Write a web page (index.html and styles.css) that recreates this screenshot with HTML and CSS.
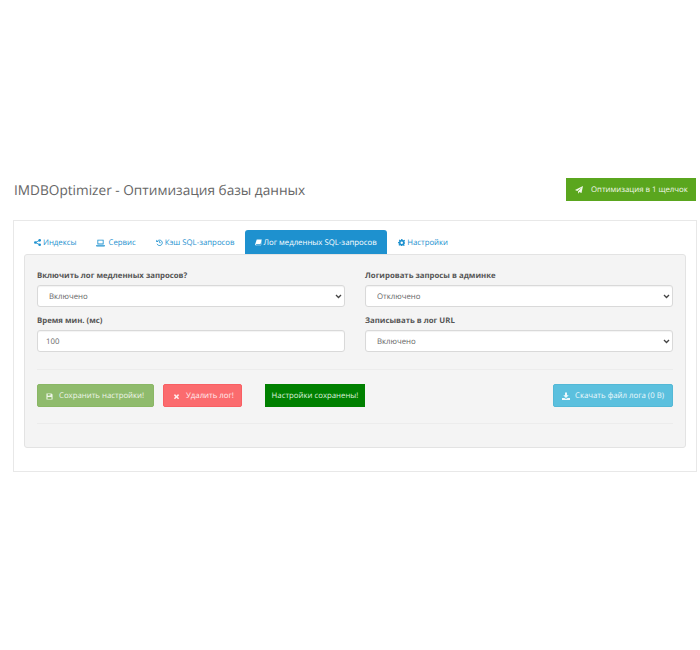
FILE: index.html
```html
<!DOCTYPE html>
<html lang="ru">
<head>
<meta charset="utf-8">
<title>IMDBOptimizer</title>
<link rel="stylesheet" href="styles.css">
</head>
<body>
<div class="page">
  <header class="head">
    <h1 class="title">IMDBOptimizer - Оптимизация базы данных</h1>
    <a class="btn btn-opt"><svg class="ico ico-l" viewBox="0 0 16 16"><path d="M16 0 L13 14 L8.6 12 L6.5 15.5 L6 11 L13.5 3 L4.5 10 L0 8 Z"/></svg>Оптимизация в 1 щелчок</a>
  </header>
  <section class="panel">
    <nav class="tabs">
      <a class="tab tab-a"><svg class="ico" viewBox="0 0 16 16"><circle cx="3" cy="8" r="3"/><circle cx="13" cy="3" r="3"/><circle cx="13" cy="13" r="3"/><path d="M3 8 L13 3 M3 8 L13 13" stroke="currentColor" stroke-width="2"/></svg>Индексы</a>
      <a class="tab tab-b"><svg class="ico ico-wide" viewBox="0 0 16 14"><path d="M2.5 1 H13.5 V9.5 H2.5 Z M4 2.5 V8 H12 V2.5 Z M0 11 H16 V12 L15 13 H1 L0 12 Z" fill-rule="evenodd"/></svg>Сервис</a>
      <a class="tab tab-c"><svg class="ico" viewBox="0 0 16 16"><path d="M3.6 4.6 A6.2 6.2 0 1 1 2.4 11" fill="none" stroke="currentColor" stroke-width="2"/><path d="M0.5 1.5 L6 7 H0.5 Z"/><path d="M8 4.5 V8.5 H11" fill="none" stroke="currentColor" stroke-width="1.6"/></svg>Кэш SQL-запросов</a>
      <a class="tab tab-active"><svg class="ico" viewBox="0 0 16 16"><path d="M4 1 H15.5 L12.5 12 H3 Q1.8 12 2.2 13.2 Q2.5 14 3.5 14 H13 L15.5 5 L16 5.5 L13.5 15 H3 Q0.5 15 0.2 12.5 Z"/></svg>Лог медленных SQL-запросов</a>
      <a class="tab tab-e"><svg class="ico ico-gear" viewBox="0 0 16 16"><path d="M6.6 0 H9.4 L9.9 2.2 L11.6 2.9 L13.6 1.7 L14.3 2.4 L15.1 4.4 L13.3 5.6 L13.8 7 L16 7.4 V9.4 L13.8 9.9 L13.1 11.6 L14.3 13.6 L12.4 15 L10.4 13.3 L9.4 13.8 L9 16 H7 L6.1 13.8 L4.4 13.1 L2.4 14.3 L1 12.4 L2.7 10.4 L2.2 9.4 L0 9 V7 L2.2 6.1 L2.9 4.4 L1.7 2.4 L3.6 1 L5.6 2.7 L6.6 2.2 Z M8 5.4 A2.6 2.6 0 1 0 8 10.6 A2.6 2.6 0 1 0 8 5.4 Z" fill-rule="evenodd"/></svg>Настройки</a>
    </nav>
    <div class="well">
      <div class="grid">
        <div class="field">
          <label class="label">Включить лог медленных запросов?</label>
          <select class="control control-select"><option>Включено</option></select>
        </div>
        <div class="field">
          <label class="label">Логировать запросы в админке</label>
          <select class="control control-select"><option>Отключено</option></select>
        </div>
        <div class="field">
          <label class="label">Время мин. (мс)</label>
          <input class="control control-text" type="text" value="100">
        </div>
        <div class="field">
          <label class="label">Записывать в лог URL</label>
          <select class="control control-select"><option>Включено</option></select>
        </div>
      </div>
      <div class="actions">
        <a class="btn btn-save"><svg class="ico ico-l" viewBox="0 0 16 16"><path d="M1 1 H12.5 L15 3.5 V15 H1 Z M4 2.5 V6.5 H11 V2.5 Z M8.6 3 H10.4 V6 H8.6 Z M3.5 9 V13.5 H12.5 V9 Z" fill-rule="evenodd"/></svg>Сохранить настройки!</a>
        <a class="btn btn-del"><svg class="ico ico-l ico-x" viewBox="0 0 16 16"><path d="M4.5 2.5 L8 6 L11.5 2.5 L14 5 L10.5 8.5 L14 12 L11.5 14.5 L8 11 L4.5 14.5 L2 12 L5.5 8.5 L2 5 Z"/></svg>Удалить лог!</a>
        <span class="notice">Настройки сохранены!</span>
        <a class="btn btn-dl"><svg class="ico ico-l ico-dl" viewBox="0 0 16 16"><path d="M6 1 H10 V6.5 H13.5 L8 12 L2.5 6.5 H6 Z M0 12 H5 L8 14 L11 12 H16 V16 H0 Z"/></svg>Скачать файл лога (0 B)</a>
      </div>
    </div>
  </section>
</div>
</body>
</html>
```

FILE: styles.css
```css
* { box-sizing: border-box; }
html, body { margin: 0; background: #fff; }
body { font-family: "Open Sans", sans-serif; font-size: 7.8px; color: #666; text-rendering: geometricPrecision; }
.page { padding: 178px 3px 0 13px; }
.head { display: flex; justify-content: space-between; align-items: center; height: 23px; margin-bottom: 19px; padding-right: 1px; }
.title { margin: 0 0 0 1px; font-size: 13.65px; font-weight: 400; color: #666; line-height: 23px; }
.panel { height: 252px; border: 1px solid #e8e8e8; padding: 9px 10px 0; background: #fff; }
.tabs { display: flex; height: 25px; }
.tab { display: flex; align-items: center; height: 24px; padding: 1px 10px 0; color: #1e91cf; border-radius: 3px 3px 0 0; white-space: nowrap; }
.tab-a { margin-right: 1px; }
.tab-active { background: #1e91cf; color: #fff; }
.tab-e { padding-left: 11px; }
.ico { width: 7px; height: 7px; fill: currentColor; margin-right: 2px; flex: none; }
.ico-wide { width: 9px; height: 8px; margin-left: -1px; margin-right: 3px; }
.ico-gear { width: 7.5px; height: 7.5px; }
.ico-l { width: 7px; height: 7px; margin-right: 6px; }
.well { height: 194px; margin-top: -1px; background: #f4f4f4; border: 1px solid #e3e3e3; border-radius: 3px; padding: 15px 12px 0; }
.grid { display: grid; grid-template-columns: 1fr 1fr; column-gap: 20px; row-gap: 8px; padding-bottom: 17px; border-bottom: 1px solid #ececec; }
.field { display: flex; flex-direction: column; }
.label { font-weight: 700; color: #555; line-height: 12px; margin-bottom: 3px; height: 12px; }
.control { width: 100%; height: 22px; border: 1px solid #d9d9d9; border-radius: 3px; background: #fff; color: #666; font: 7.8px "Open Sans", sans-serif; text-rendering: geometricPrecision; padding: 1px 8px 0; box-shadow: inset 0 1px 1px rgba(0,0,0,.05); }
.control-select { appearance: none; -webkit-appearance: none; padding-left: 11px; background: #fff url("data:image/svg+xml,%3Csvg xmlns='http://www.w3.org/2000/svg' viewBox='0 0 8 6'%3E%3Cpath d='M1 1.2 L4 4.2 L7 1.2' fill='none' stroke='%23444' stroke-width='1.6'/%3E%3C/svg%3E") no-repeat right 2px center / 7px 5px; }
.actions { display: flex; align-items: center; height: 54px; padding-bottom: 2px; border-bottom: 1px solid #ececec; }
.btn { display: inline-flex; align-items: center; height: 23px; color: #fff; border-radius: 2px; border: 1px solid transparent; padding: 1px 8px 0; white-space: nowrap; }
.btn-opt { width: 130px; background: #5aa61e; border-radius: 0; color: #f2f8ec; }
.btn-opt .ico-l { margin-right: 8px; width: 8px; height: 8px; }
.btn-save { width: 117px; background: #8fbb6c; border-color: #8ab765; margin-right: 9px; color: #eef5e8; }
.btn-del { width: 79px; background: #fb6b6e; border-color: #f85f63; color: #ffeeee; }
.ico-x { margin-left: 1px; }
.notice { display: inline-flex; align-items: center; justify-content: center; width: 100px; height: 23px; padding-top: 1px; margin-left: 23px; background: #008000; color: #dff0df; white-space: nowrap; }
.btn-dl { width: 120px; margin-left: auto; background: #5bc0de; border-color: #53b8d6; color: #eef9fc; }
.ico-dl { width: 8px; height: 8px; margin-right: 5px; }
```
